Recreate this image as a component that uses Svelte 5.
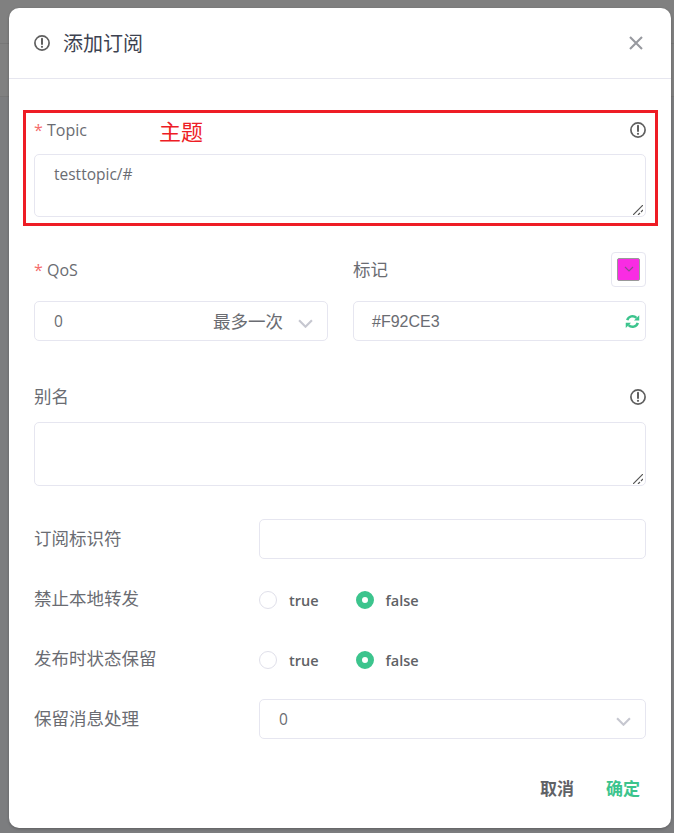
<script lang="ts">
	const radioRows = [
		{ label: '禁止本地转发' },
		{ label: '发布时状态保留' }
	];
</script>

{#snippet info()}
	<svg class="info" viewBox="0 0 16 16" aria-hidden="true">
		<circle cx="8" cy="8" r="7.1" fill="none" stroke="currentColor" stroke-width="1.7" />
		<path d="M8 3.8v5.2" stroke="currentColor" stroke-width="2" stroke-linecap="round" />
		<circle cx="8" cy="11.8" r="1.1" fill="currentColor" />
	</svg>
{/snippet}

{#snippet grip()}
	<svg class="grip" viewBox="0 0 10 10" aria-hidden="true">
		<path d="M0 10 10 0M5 10l2-2M8 7l2-2" stroke="#555" stroke-width="1.2" fill="none" />
	</svg>
{/snippet}

{#snippet chevron()}
	<svg class="chevron" viewBox="0 0 14 8" aria-hidden="true">
		<path d="M1 1l6 6 6-6" stroke="#c6c7d0" stroke-width="2" fill="none" />
	</svg>
{/snippet}

<div class="backdrop">
	<div class="dialog">
		<header class="dialog-head">
			<span class="head-icon">{@render info()}</span>
			<h2>添加订阅</h2>
			<svg class="close" viewBox="0 0 14 14" aria-hidden="true">
				<path d="M1 1l12 12M13 1 1 13" stroke="#97999f" stroke-width="2.1" fill="none" />
			</svg>
		</header>

		<div class="dialog-body">
			<div class="field topic">
				<div class="annotation"><span>主题</span></div>
				<div class="label-row">
					<label class="latin"><i>*</i> Topic</label>
					{@render info()}
				</div>
				<div class="textarea topic-area">testtopic/#{@render grip()}</div>
			</div>

			<div class="two-col">
				<div>
					<div class="label-row tall">
						<label class="latin"><i>*</i> QoS</label>
					</div>
					<div class="input select">
						<span>0</span>
						<span class="hint">最多一次</span>
						{@render chevron()}
					</div>
				</div>
				<div>
					<div class="label-row tall">
						<label>标记</label>
						<div class="swatch">
							<div class="swatch-color">
								<svg viewBox="0 0 10 6" aria-hidden="true">
									<path d="M1 1l4 4 4-4" stroke="#8e4a90" stroke-width="1.2" fill="none" />
								</svg>
							</div>
						</div>
					</div>
					<div class="input color">
						<span>#F92CE3</span>
						<svg class="refresh" viewBox="0 0 16 16" aria-hidden="true">
							<path d="M2.4 6.6A5.8 5.8 0 0 1 12.2 4.2" stroke="#3cc48d" stroke-width="2.7" fill="none" />
							<path d="M15.2 1.2v5.6H9.6z" fill="#3cc48d" />
							<path d="M13.6 9.4A5.8 5.8 0 0 1 3.8 11.8" stroke="#3cc48d" stroke-width="2.7" fill="none" />
							<path d="M.8 14.8V9.2h5.6z" fill="#3cc48d" />
						</svg>
					</div>
				</div>
			</div>

			<div class="field alias">
				<div class="label-row">
					<label>别名</label>
					{@render info()}
				</div>
				<div class="textarea alias-area">{@render grip()}</div>
			</div>

			<div class="row id-row">
				<label>订阅标识符</label>
				<div class="input grow"></div>
			</div>

			{#each radioRows as row}
				<div class="row radio-row">
					<label>{row.label}</label>
					<div class="radios">
						<span class="radio"><b></b>true</span>
						<span class="radio on"><b></b>false</span>
					</div>
				</div>
			{/each}

			<div class="row handling">
				<label>保留消息处理</label>
				<div class="input select grow">
					<span>0</span>
					{@render chevron()}
				</div>
			</div>
		</div>

		<footer class="dialog-foot">
			<button class="ghost">取消</button>
			<button class="ghost ok">确定</button>
		</footer>
	</div>
</div>

<style>
	:global(body) {
		margin: 0;
	}

	.backdrop {
		height: 833px;
		padding: 8px 3px 0 9px;
		box-sizing: border-box;
		overflow: hidden;
		background:
			linear-gradient(#777, #777) 0 43px / 100% 1px no-repeat,
			linear-gradient(#777, #777) 0 96px / 100% 1px no-repeat,
			linear-gradient(#808080 96px, #7c7d7f 97px);
		font-family: 'Open Sans', 'Noto Sans CJK SC', sans-serif;
		color: #606266;
	}

	.dialog {
		height: 820px;
		background: #fff;
		border-radius: 10px;
		box-shadow: 0 1px 3px rgba(0, 0, 0, 0.25);
		display: flex;
		flex-direction: column;
	}

	.dialog-head {
		height: 71px;
		flex: none;
		box-sizing: border-box;
		border-bottom: 1px solid #e6e6ef;
		display: flex;
		align-items: center;
		padding: 0 28px 0 25px;
	}

	.head-icon {
		display: flex;
		margin-right: 13px;
		color: #666;
	}

	h2 {
		flex: 1;
		margin: 0 0 2px;
		font-size: 20px;
		font-weight: 400;
		color: #3d4250;
	}

	.close {
		width: 14px;
		height: 14px;
	}

	.info {
		width: 16px;
		height: 16px;
		color: #5f5f5f;
		flex: none;
	}

	.dialog-body {
		flex: 1;
		padding: 0 25px;
	}

	label {
		font-size: 17.5px;
		color: #6a6c72;
		padding-bottom: 3px;
	}

	label.latin {
		font-size: 16px;
		padding-bottom: 0;
		margin-left: -1px;
	}

	label i {
		font-style: normal;
		color: #f56c6c;
		margin-left: 1px;
	}

	.label-row {
		display: flex;
		align-items: center;
		justify-content: space-between;
		height: 24px;
	}

	.label-row.tall {
		height: 36px;
		margin-bottom: 14px;
	}

	.label-row.tall label {
		margin-top: 2px;
	}

	.field.topic {
		position: relative;
		margin-top: 39px;
	}

	.annotation {
		position: absolute;
		left: -11px;
		right: -12px;
		top: -8px;
		height: 116px;
		box-sizing: border-box;
		border: 3px solid #ee1c25;
		pointer-events: none;
	}

	.annotation span {
		position: absolute;
		left: 133px;
		top: 3px;
		font-size: 22px;
		line-height: 30px;
		color: #ee1c25;
	}

	.textarea {
		position: relative;
		margin-top: 12px;
		box-sizing: border-box;
		border: 1px solid #e6e6f0;
		border-radius: 5px;
		padding: 8px 19px;
		font-size: 15.5px;
		line-height: 22px;
		color: #6a6c72;
	}

	.topic-area {
		height: 63px;
	}

	.alias-area {
		height: 64px;
	}

	.grip {
		position: absolute;
		right: 2px;
		bottom: 1px;
		width: 10px;
		height: 10px;
	}

	.two-col {
		display: grid;
		grid-template-columns: 294px 293px;
		gap: 25px;
		margin-top: 34px;
	}

	.input {
		height: 40px;
		box-sizing: border-box;
		border: 1px solid #e6e6f0;
		border-radius: 5px;
		display: flex;
		align-items: center;
		padding: 0 14px 0 19px;
		font-size: 15.5px;
		color: #6a6c72;
	}

	.select span:first-child {
		flex: 1;
	}

	.hint {
		font-size: 17.5px;
		margin: 0 15px 2px 0;
	}

	.chevron {
		width: 15px;
		height: 9px;
		margin-top: 4px;
	}

	.color {
		justify-content: space-between;
		padding: 1px 5px 0 18px;
		font-family: 'Liberation Sans', sans-serif;
		font-size: 16px;
	}

	.refresh {
		width: 15px;
		height: 15px;
	}

	.swatch {
		width: 35px;
		height: 35px;
		box-sizing: border-box;
		border: 1px solid #e6e6f0;
		border-radius: 4px;
		padding: 5px;
	}

	.swatch-color {
		height: 23px;
		box-sizing: border-box;
		background: #f92ce3;
		border: 1px solid #999;
		border-radius: 2px;
		display: flex;
		align-items: center;
		justify-content: center;
	}

	.swatch-color svg {
		width: 10px;
		height: 6px;
	}

	.field.alias {
		margin-top: 44px;
	}

	.alias .textarea {
		margin-top: 13px;
	}

	.row {
		display: flex;
		align-items: center;
	}

	.row label {
		width: 225px;
		flex: none;
		padding-bottom: 4px;
	}

	.grow {
		flex: 1;
	}

	.id-row {
		margin-top: 33px;
	}

	.radio-row {
		height: 40px;
		margin-top: 20px;
	}

	.handling {
		margin-top: 20px;
	}

	.radios {
		display: flex;
		gap: 37px;
		padding-top: 2px;
	}

	.radio {
		display: flex;
		align-items: center;
		gap: 12px;
		font-size: 14.5px;
		font-weight: 600;
		color: #606266;
	}

	.radio b {
		width: 18px;
		height: 18px;
		box-sizing: border-box;
		border: 1px solid #e0e0ea;
		border-radius: 50%;
	}

	.radio.on b {
		border: 6px solid #3cc48d;
	}

	.dialog-foot {
		display: flex;
		justify-content: flex-end;
		gap: 32px;
		padding: 0 31px 28px 0;
	}

	.ghost {
		border: 0;
		background: none;
		padding: 0;
		font: 600 17px 'Open Sans', 'Noto Sans CJK SC', sans-serif;
		color: #606266;
	}

	.ok {
		color: #3cc48d;
	}
</style>
